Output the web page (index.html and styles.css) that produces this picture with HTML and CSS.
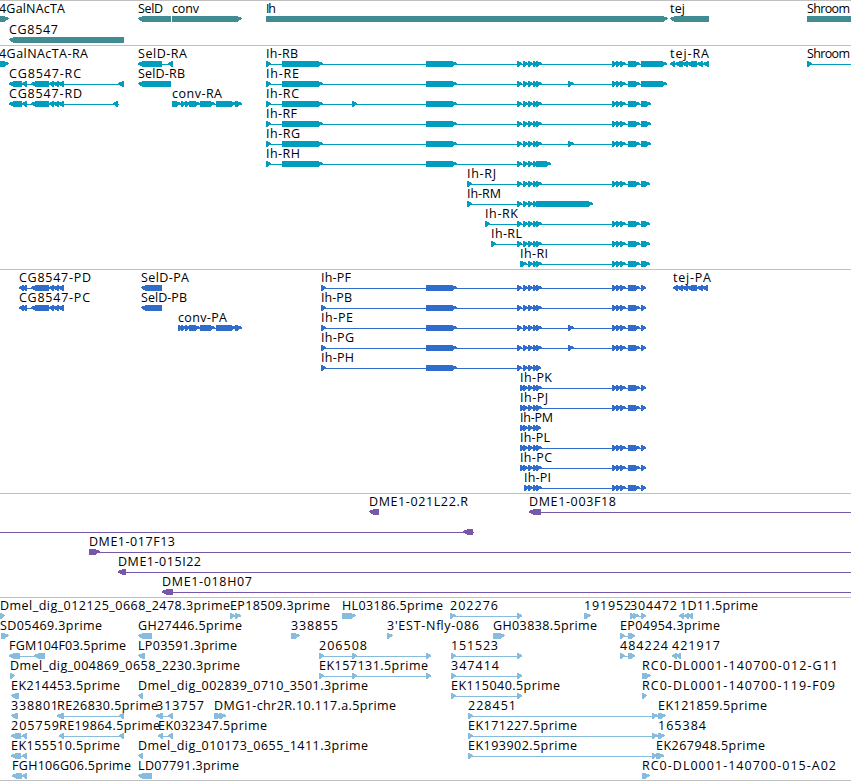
FILE: index.html
```html
<!DOCTYPE html>
<html>
<head>
    <meta charset="utf-8">
    <title>Genome browser</title>
    <link rel="stylesheet" href="styles.css">
</head>

<body>

<div class="browser">
    <svg class="track genes" id="genes"></svg>
    <svg class="track transcripts" id="transcripts"></svg>
    <svg class="track proteins" id="proteins"></svg>
    <svg class="track clones" id="clones"></svg>
    <svg class="track ests" id="ests"></svg>
</div>

<script src="tracks.js"></script>
</body>
</html>
```
FILE: styles.css
```css
body {
    margin: 0;
    background: white;
}

.browser {
    display: flex;
    flex-direction: column;
    width: 851px;
    overflow: hidden;
    border-bottom: 1px solid #c0c0c0;
}

.track {
    display: block;
    box-sizing: border-box;
    width: 851px;
    border-top: 1px solid #c0c0c0;
    overflow: hidden;
}

.track text {
    font-family: "Open Sans", "DejaVu Sans", sans-serif;
    font-size: 12.5px;
    fill: black;
}

.track polygon, .track rect {
    shape-rendering: crispEdges;
}

.genes {
    height: 45px;
    fill: #408c92;
}

.transcripts {
    height: 224px;
    fill: #009dbf;
}

.proteins {
    height: 224px;
    fill: #306ccc;
}

.clones {
    height: 104px;
    fill: #7758a8;
}

.ests {
    height: 183px;
    fill: #87bcde;
}
```
FILE: tracks.js
```js
"use strict"

const SVG = "http://www.w3.org/2000/svg";

// exons shared by several features
const ihFirst = [[266, 271], [282, 323], [426, 457]];
const ihMid = [[517, 522], [523, 528], [528, 533], [533, 538]];
const ihMidEnd = [[536, 542]];
const ihLate = [[612, 617], [616, 621], [620, 626], [628, 633], [630, 635], [632, 637], [634, 640]];
const ihExtra = [[568, 574]];
const ihProt = [[321, 326], [426, 457]];
const ihShort = [[520, 525], [523, 528], [528, 533], [533, 538]];
const cgExons = [[31, 49], [49, 54], [53, 59], [58, 64]];
const convExons = [[181, 186], [185, 190], [189, 200], [200, 215], [216, 221], [218, 236], [235, 242]];

const ihTail = ihMid.concat(ihMidEnd, ihLate);
const ihTailExtra = ihMid.concat(ihMidEnd, ihExtra, ihLate);
const ihShortTail = ihShort.concat(ihMidEnd, ihLate, [[641, 646]]);

// row, label, label start, label end, strand, exons, [line start, line end]
const genes = [
    [0, "4GalNAcTA", -1, 65, "+", [[-20, 9]]],
    [0, "SelD", 138, 163, "-", [[138, 171]]],
    [0, "conv", 172, 199, "+", [[172, 242]]],
    [0, "Ih", 266, 276, "+", [[266, 668]]],
    [0, "tej", 670, 685, "-", [[670, 709]]],
    [0, "Shroom", 807, 850, "+", [[807, 870]]],
    [1, "CG8547", 9, 58, "-", [[9, 124]]]
];

const transcripts = [
    [0, "4GalNAcTA-RA", -1, 88, "+", [[-20, 9]]],
    [1, "CG8547-RC", 9, 81, "-", [[9, 22], [22, 27]].concat(cgExons, [[118, 124]])],
    [2, "CG8547-RD", 9, 82, "-", [[9, 22], [22, 27]].concat(cgExons, [[113, 118]]), [9, 119]],
    [0, "SelD-RA", 138, 187, "-", [[138, 162], [168, 173]]],
    [1, "SelD-RB", 138, 185, "-", [[138, 171]]],
    [2, "conv-RA", 172, 222, "+", [[172, 181]].concat(convExons)],
    [0, "Ih-RB", 266, 298, "+", ihFirst.concat(ihTail, [[641, 667]])],
    [1, "Ih-RE", 266, 299, "+", ihFirst.concat(ihTailExtra, [[641, 667]])],
    [2, "Ih-RC", 266, 299, "+", ihFirst.concat([[352, 357]], ihTail, [[641, 651]])],
    [3, "Ih-RF", 266, 297, "+", ihFirst.concat(ihTail, [[641, 651]])],
    [4, "Ih-RG", 266, 300, "+", ihFirst.concat(ihTailExtra, [[641, 651]])],
    [5, "Ih-RH", 266, 300, "+", ihFirst.concat(ihMid, [[536, 551]])],
    [6, "Ih-RJ", 467, 496, "+", [[467, 472]].concat(ihTail, [[641, 650]])],
    [7, "Ih-RM", 467, 501, "+", [[467, 472]].concat(ihMid, [[536, 593]])],
    [8, "Ih-RK", 485, 518, "+", [[485, 490]].concat(ihTail, [[641, 650]])],
    [9, "Ih-RL", 491, 522, "+", [[491, 496]].concat(ihTail, [[641, 650]])],
    [10, "Ih-RI", 520, 548, "+", [[520, 527], [528, 533], [533, 538]].concat(ihMidEnd, ihLate, [[641, 650]])],
    [0, "tej-RA", 670, 709, "-", [[670, 675], [675, 683], [682, 688], [687, 697], [697, 703], [703, 709]]],
    [0, "Shroom", 807, 850, "+", [[807, 812]], [807, 851]]
];

const proteins = [
    [0, "CG8547-PD", 19, 91, "-", [[19, 24], [22, 27]].concat(cgExons)],
    [1, "CG8547-PC", 19, 90, "-", [[19, 24], [22, 27]].concat(cgExons)],
    [0, "SelD-PA", 141, 189, "-", [[141, 162]]],
    [1, "SelD-PB", 141, 187, "-", [[141, 162]]],
    [2, "conv-PA", 178, 227, "+", [[178, 183]].concat(convExons)],
    [0, "Ih-PF", 321, 351, "+", ihProt.concat(ihTail, [[641, 646]])],
    [1, "Ih-PB", 321, 352, "+", ihProt.concat(ihTail, [[641, 646]])],
    [2, "Ih-PE", 321, 353, "+", ihProt.concat(ihTailExtra, [[641, 646]])],
    [3, "Ih-PG", 321, 354, "+", ihProt.concat(ihTailExtra, [[641, 646]])],
    [4, "Ih-PH", 321, 354, "+", ihProt.concat(ihMid, [[536, 541]])],
    [5, "Ih-PK", 520, 552, "+", ihShortTail],
    [6, "Ih-PJ", 520, 548, "+", ihShortTail],
    [7, "Ih-PM", 520, 553, "+", ihShort.concat([[536, 541]])],
    [8, "Ih-PL", 520, 550, "+", ihShortTail],
    [9, "Ih-PC", 520, 552, "+", ihShortTail],
    [10, "Ih-PI", 524, 551, "+", [[524, 529], [528, 533], [533, 538]].concat(ihMidEnd, ihLate, [[641, 646]])],
    [0, "tej-PA", 673, 711, "-", [[673, 678], [677, 683], [682, 688], [687, 697], [697, 703], [702, 708]]]
];

const clones = [
    [0, "DME1-021L22.R", 369, 468, "-", [[369, 379]]],
    [0, "DME1-003F18", 529, 616, "-", [[529, 541]], [529, 851]],
    [1, "", 0, 0, "-", [[463, 473]], [0, 474]],
    [2, "DME1-017F13", 89, 175, "+", [[89, 100]], [89, 851]],
    [3, "DME1-015I22", 118, 201, "-", [[118, 126]], [118, 851]],
    [4, "DME1-018H07", 162, 252, "-", [[162, 173]], [162, 851]]
];

const ests = [
    [0, "Dmel_dig_012125_0668_2478.3prime", 0, 230, "+", [[0, 5]]],
    [0, "EP18509.3prime", 230, 330, "+", [[230, 235], [235, 241]]],
    [0, "HL03186.5prime", 342, 443, "+", [[342, 356]]],
    [0, "202276", 450, 498, "+", [[450, 456], [517, 522]]],
    [0, "191952", 584, 631, "+", [[584, 591]]],
    [0, "304472", 630, 677, "+", [[630, 635], [633, 639], [641, 646]]],
    [0, "1D11.5prime", 680, 758, "-", [[679, 684], [684, 689], [688, 693]]],
    [1, "SD05469.3prime", 0, 102, "+", [[1, 9]]],
    [1, "GH27446.5prime", 138, 242, "-", [[138, 152]]],
    [1, "338855", 291, 338, "+", [[291, 300]]],
    [1, "3'EST-Nfly-086", 387, 479, "+", [[387, 393]]],
    [1, "GH03838.5prime", 493, 597, "+", [[493, 505]]],
    [1, "EP04954.3prime", 620, 720, "+", [[620, 625], [628, 633], [630, 635]]],
    [2, "FGM104F03.5prime", 9, 126, "-", [[9, 20], [34, 45]]],
    [2, "LP03591.3prime", 138, 237, "-", [[138, 145]]],
    [2, "206508", 319, 367, "+", [[319, 324], [352, 357], [426, 431]]],
    [2, "151523", 451, 498, "+", [[451, 456], [517, 522]]],
    [2, "484224", 620, 668, "+", [[620, 625], [628, 633], [630, 635]]],
    [2, "421917", 672, 720, "-", [[672, 677], [676, 681]]],
    [3, "Dmel_dig_004869_0658_2230.3prime", 10, 240, "+", [[10, 15]]],
    [3, "EK157131.5prime", 319, 428, "+", [[319, 324], [352, 357], [426, 431]]],
    [3, "347414", 451, 499, "+", [[451, 456], [517, 522]]],
    [3, "RC0-DL0001-140700-012-G11", 642, 838, "+", [[642, 651]]],
    [4, "EK214453.5prime", 11, 120, "-", [[11, 19]]],
    [4, "Dmel_dig_002839_0710_3501.3prime", 138, 368, "-", [[138, 143]]],
    [4, "EK115040.5prime", 451, 560, "+", [[451, 456], [517, 522]]],
    [4, "RC0-DL0001-140700-119-F09", 642, 835, "+", [[642, 647]]],
    [5, "338801", 11, 58, "-", [[11, 18]]],
    [5, "RE26830.5prime", 57, 158, "-", [[57, 64], [119, 124]]],
    [5, "313757", 156, 204, "-", [[156, 163], [168, 173]]],
    [5, "DMG1-chr2R.10.117.a.5prime", 214, 396, "+", [[214, 219], [216, 221], [219, 226]]],
    [5, "228451", 468, 516, "+", [[468, 473], [652, 658], [658, 663]]],
    [5, "EK121859.5prime", 658, 767, "+", [[658, 666]]],
    [6, "205759", 11, 59, "-", [[11, 21], [22, 27]]],
    [6, "RE19864.5prime", 59, 160, "-", [[59, 64], [119, 124]]],
    [6, "EK032347.5prime", 158, 267, "-", [[158, 163], [168, 173]]],
    [6, "EK171227.5prime", 468, 577, "+", [[468, 473], [652, 658], [658, 663]]],
    [6, "165384", 658, 706, "+", [[658, 665]]],
    [7, "EK155510.5prime", 11, 120, "-", [[11, 21], [22, 27]]],
    [7, "Dmel_dig_010173_0655_1411.3prime", 138, 368, "-", [[138, 143]]],
    [7, "EK193902.5prime", 468, 577, "+", [[468, 473], [652, 657]]],
    [7, "EK267948.5prime", 656, 765, "+", [[656, 661], [658, 664]]],
    [8, "FGH106G06.5prime", 12, 131, "-", [[12, 22], [22, 27]]],
    [8, "LD07791.3prime", 138, 239, "-", [[138, 152]]],
    [8, "RC0-DL0001-140700-015-A02", 642, 836, "+", [[642, 650]]]
];

function add(parent, name, attrs) {
    const el = document.createElementNS(SVG, name);
    for (let key in attrs) el.setAttribute(key, attrs[key]);
    parent.appendChild(el);
    return el;
}

function drawTrack(id, features, pitch) {
    const svg = document.getElementById(id);

    for (let [row, label, x1, x2, strand, exons, line] of features) {
        const top = row * pitch + 15;

        if (label) {
            const text = add(svg, "text", {x: x1, y: top - 3, textLength: x2 - x1});
            text.textContent = label;
        }

        if (!line) line = [exons[0][0], exons[exons.length - 1][1]];
        if (exons.length > 1 || line[1] - line[0] > exons[0][1] - exons[0][0]) {
            add(svg, "rect", {x: line[0], y: top + 3, width: line[1] - line[0], height: 1});
        }

        for (let [a, b] of exons) {
            // the point takes up to 6px of the exon
            const tip = Math.min(6, b - a);
            let points;
            if (strand === "+") {
                points = [a, top, b - tip + 0.5, top, b, top + 2, b, top + 3, b - tip + 1, top + 6, a, top + 6];
            } else {
                points = [b, top, a + tip - 0.5, top, a, top + 2, a, top + 3, a + tip - 1, top + 6, b, top + 6];
            }
            add(svg, "polygon", {points: points.join(" ")});
        }
    }
}

drawTrack("genes", genes, 21);
drawTrack("transcripts", transcripts, 20);
drawTrack("proteins", proteins, 20);
drawTrack("clones", clones, 20);
drawTrack("ests", ests, 20);
```
